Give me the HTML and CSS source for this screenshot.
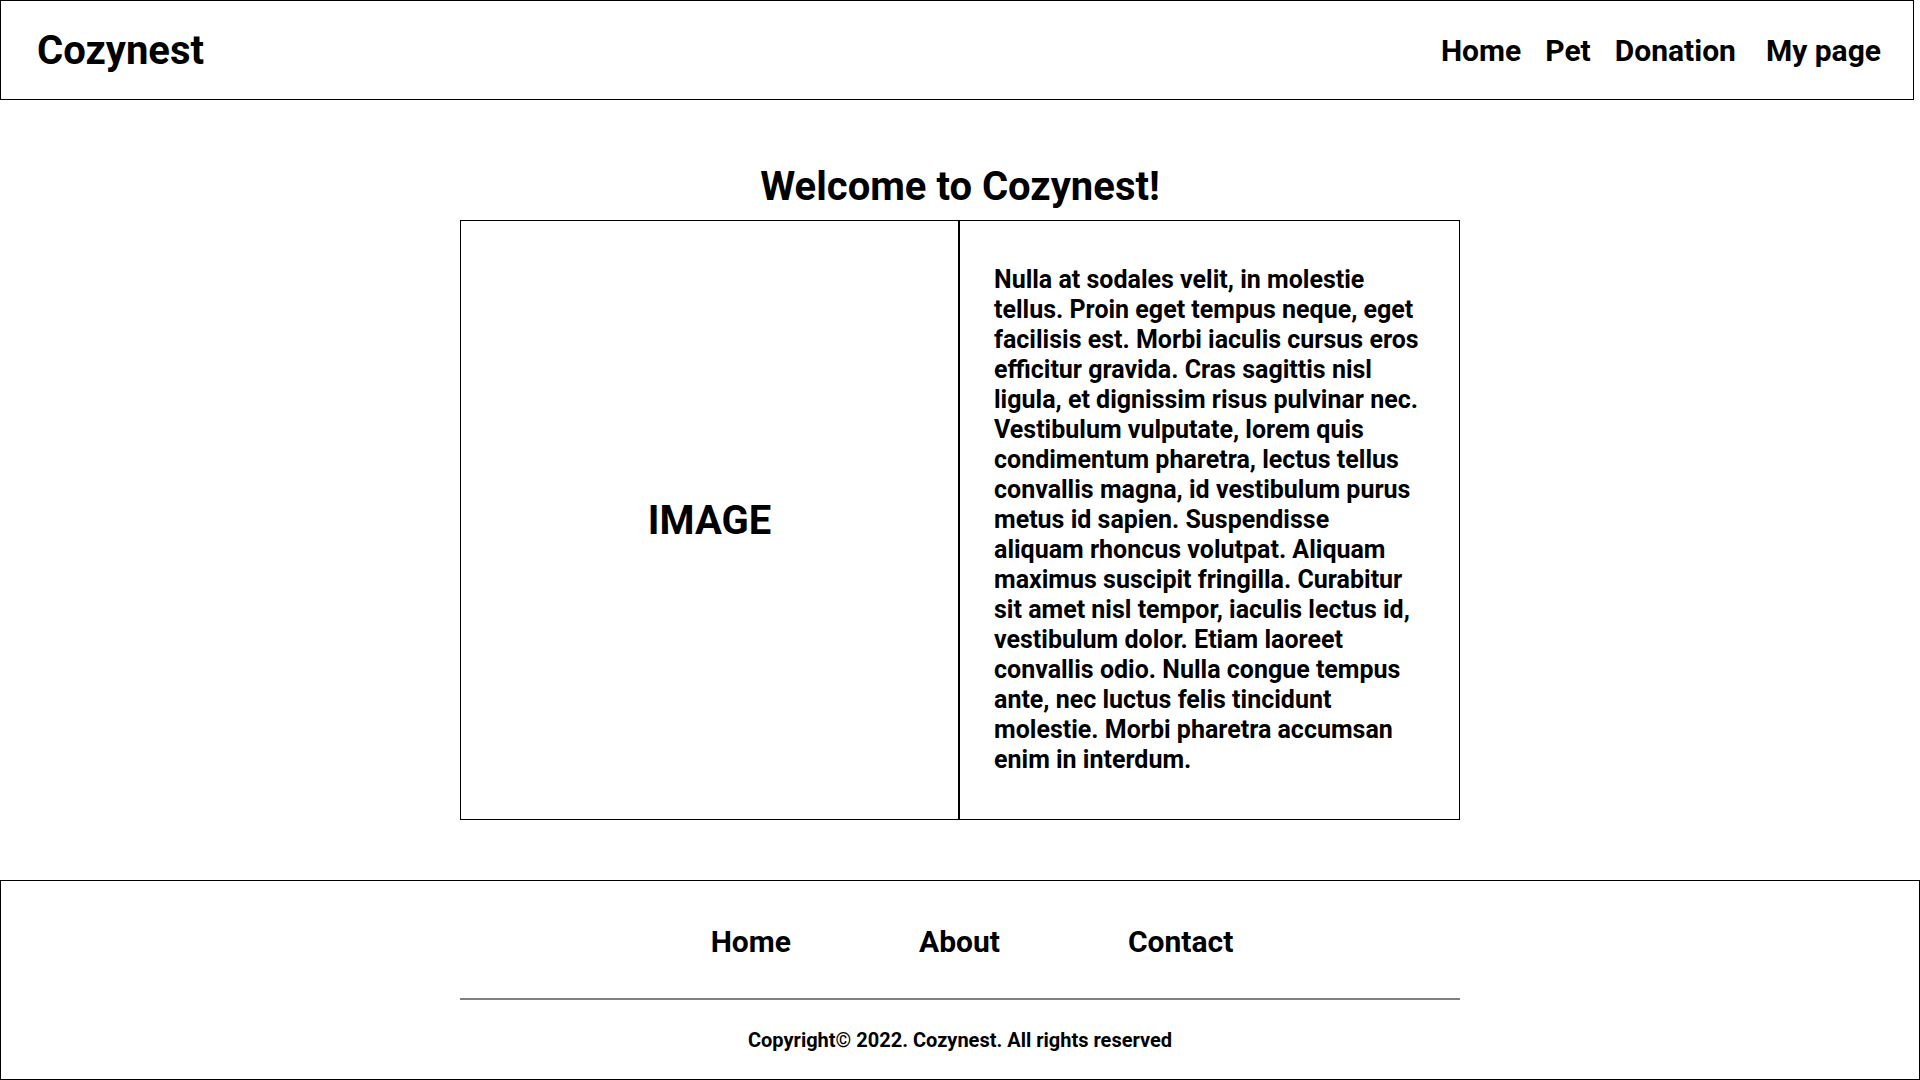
FILE: index.html
```html
<!DOCTYPE html>
<html lang="en">
<head>
  <meta charset="UTF-8">
  <title>Cozynest</title>
  <link rel="stylesheet" href="styles.css">
</head>
<body>
  <header class="site-header">
    <div class="logo">Cozynest</div>
    <nav class="top-nav">
      <a href="#">Home</a>
      <a href="#">Pet</a>
      <a href="#">Donation</a>
      <a href="#" class="my-page">My page</a>
    </nav>
  </header>

  <main class="content">
    <h1>Welcome to Cozynest!</h1>
    <section class="intro">
      <div class="intro-image">IMAGE</div>
      <div class="intro-text">
        <p>Nulla at sodales velit, in molestie tellus. Proin eget tempus neque, eget facilisis est. Morbi iaculis cursus eros efficitur gravida. Cras sagittis nisl ligula, et dignissim risus pulvinar nec. Vestibulum vulputate, lorem quis condimentum pharetra, lectus tellus convallis magna, id vestibulum purus metus id sapien. Suspendisse aliquam rhoncus volutpat. Aliquam maximus suscipit fringilla. Curabitur sit amet nisl tempor, iaculis lectus id, vestibulum dolor. Etiam laoreet convallis odio. Nulla congue tempus ante, nec luctus felis tincidunt molestie. Morbi pharetra accumsan enim in interdum.</p>
      </div>
    </section>
  </main>

  <footer class="site-footer">
    <nav class="footer-nav">
      <a href="#">Home</a>
      <a href="#">About</a>
      <a href="#">Contact</a>
    </nav>
    <hr class="footer-line">
    <p class="copyright">Copyright© 2022. Cozynest. All rights reserved</p>
  </footer>
</body>
</html>
```

FILE: styles.css
```css
body { margin: 0; font-family: Roboto, "Liberation Sans", sans-serif; font-weight: bold; color: #000; background: #fff; }
a { color: #000; text-decoration: none; }

.site-header { box-sizing: border-box; width: calc(100% - 6px); height: 100px; border: 1px solid #000; display: flex; align-items: center; justify-content: space-between; padding: 0 32px 0 36px; }
.logo { font-size: 40px; }
.top-nav { display: flex; gap: 24px; font-size: 30px; }
.top-nav .my-page { margin-left: 6px; }

.content { padding-top: 63px; }
.content h1 { margin: 0 0 10px; font-size: 40px; text-align: center; }
.intro { box-sizing: border-box; width: 1000px; height: 600px; margin: 0 auto; border: 1px solid #000; display: grid; grid-template-columns: 1fr 1fr; }
.intro-image { display: flex; align-items: center; justify-content: center; font-size: 40px; border-right: 2px solid #000; }
.intro-text { display: flex; align-items: center; padding: 0 38px 0 34px; }
.intro-text p { margin: 0; font-size: 25px; line-height: 30px; }

.site-footer { box-sizing: border-box; height: 200px; margin-top: 60px; border: 1px solid #000; padding-top: 43px; }
.footer-nav { display: flex; justify-content: center; gap: 128px; padding-left: 24px; font-size: 30px; }
.footer-line { width: 1000px; margin: 39px auto 0; border: 0; height: 2px; background: #808080; }
.copyright { margin: 28px 0 0; text-align: center; font-size: 20px; }
```
